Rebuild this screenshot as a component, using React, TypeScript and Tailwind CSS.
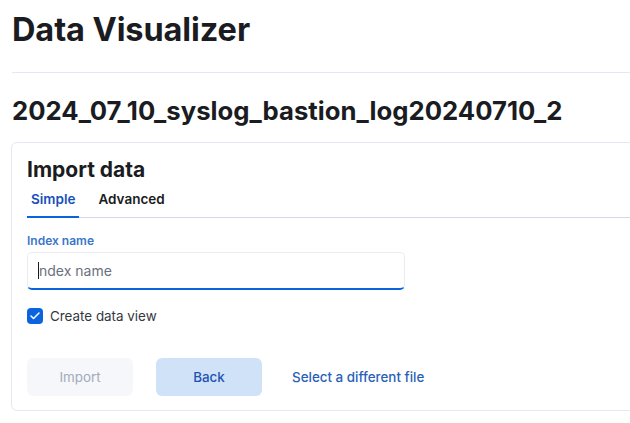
import { Check } from "lucide-react";

export default function App() {
  return (
    <main className="w-[630px] h-[423px] overflow-hidden bg-white text-[#1a1c21] font-['Inter',sans-serif]">
      <div className="pl-3">
        <h1 className="pt-[10px] text-[32.5px] leading-[40px] font-bold tracking-[-0.1px]">
          Data Visualizer
        </h1>
        <div className="mt-[22px] h-px bg-[#e3e8f2]" />
        <h2 className="mt-[22px] text-[25.7px] leading-[32px] font-bold">
          2024_07_10_syslog_bastion_log20240710_2
        </h2>
        <section className="mt-[15px] -ml-px w-[640px] h-[269px] rounded-md border border-[#e3e8f2] pl-[15px] pt-[13px]">
          <h3 className="text-[21px] leading-[28px] font-bold">Import data</h3>
          <div className="mt-[5px] flex gap-[19px] border-b border-[#d3dae6]">
            <button className="-mb-px border-b-2 border-[#0b64dd] px-1 pb-[7px] text-[13.5px] leading-[20px] font-semibold text-[#1750ba]">
              Simple
            </button>
            <button className="-mb-px border-b-2 border-transparent px-0 pb-[7px] text-[13.5px] leading-[20px] font-semibold">
              Advanced
            </button>
          </div>
          <label className="mt-[15px] block text-[12px] leading-[16px] font-semibold text-[#3a76c9]">
            Index name
          </label>
          <div className="mt-[3px] h-[38px] w-[378px] rounded-[5px] border border-[#e9edf3] border-b-2 border-b-[#0b64dd] flex items-center pl-[10px]">
            <span className="h-[17px] w-px bg-[#1a1c21]" />
            <span className="text-[14px] text-[#6a717d]">ndex name</span>
          </div>
          <div className="mt-[16px] flex items-center gap-[7px]">
            <span className="flex h-4 w-4 items-center justify-center rounded-[4px] bg-[#0b64dd]">
              <Check className="h-3 w-3 text-white" strokeWidth={3} />
            </span>
            <span className="text-[13.4px] text-[#343741]">Create data view</span>
          </div>
          <div className="mt-[32px] flex items-center">
            <button className="h-[38px] w-[106px] rounded-md bg-[#f5f7fa] text-[13.4px] text-[#a2abba]">
              Import
            </button>
            <button className="ml-[23px] h-[38px] w-[106px] rounded-md bg-[#cfe2f7] text-[13.4px] font-medium text-[#1f55b0]">
              Back
            </button>
            <button className="ml-[30px] text-[13.4px] font-medium text-[#2a5fb8]">
              Select a different file
            </button>
          </div>
        </section>
      </div>
    </main>
  );
}
